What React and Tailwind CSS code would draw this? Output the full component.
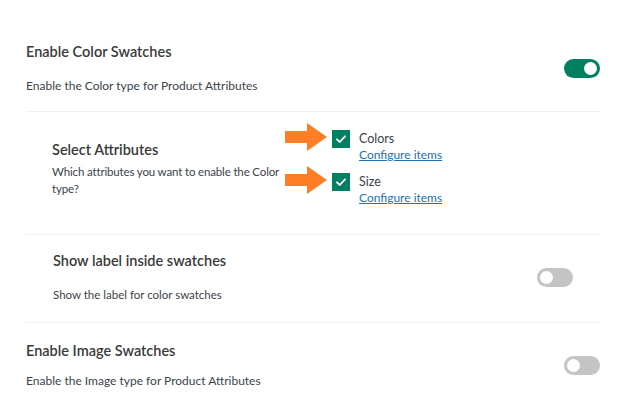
import React, { useState } from 'react';

// 토글 스위치
function Toggle({ on, onChange }) {
  return (
    <button
      onClick={() => onChange(!on)}
      className={`relative w-[36px] h-[19px] rounded-full shrink-0 ${on ? 'bg-[#008060]' : 'bg-[#c4c4c4]'}`}
    >
      <span
        className={`absolute top-[3px] w-[13px] h-[13px] rounded-full bg-white ${on ? 'left-[20px]' : 'left-[3px]'}`}
      />
    </button>
  );
}

// 주황 화살표 (주석용 오버레이)
function Arrow() {
  return (
    <svg width="42" height="28" viewBox="0 0 42 28" className="absolute left-[-47px] top-[-7px]">
      <polygon points="0,8 22,8 22,0 42,14 22,28 22,20 0,20" fill="#fd7e27" />
    </svg>
  );
}

function CheckItem({ label, checked, onToggle }) {
  return (
    <div className="relative flex gap-[9px]">
      <Arrow />
      <button
        onClick={onToggle}
        className={`w-[18px] h-[18px] flex items-center justify-center shrink-0 ${checked ? 'bg-[#008060]' : 'bg-white border border-gray-400'}`}
      >
        {checked && (
          <svg width="12" height="12" viewBox="0 0 12 12">
            <path d="M2 6.3 L4.8 9 L10 3.3" stroke="white" strokeWidth="1.8" fill="none" strokeLinecap="round" strokeLinejoin="round" />
          </svg>
        )}
      </button>
      <div className="flex flex-col">
        <span className="text-[12.5px] leading-[17px] text-[#3c434a]">{label}</span>
        <a href="#" className="text-[12px] leading-[16px] text-[#2271b1] underline">Configure items</a>
      </div>
    </div>
  );
}

export default function App() {
  const [colorOn, setColorOn] = useState(true);
  const [labelOn, setLabelOn] = useState(false);
  const [imageOn, setImageOn] = useState(false);
  const [attrs, setAttrs] = useState({ Colors: true, Size: true });

  return (
    <div className="min-h-screen bg-white px-[26px] text-[#3c434a]" style={{ fontFamily: 'Lato, "Noto Sans", sans-serif' }}>
      {/* 색상 스와치 */}
      <div className="flex items-center justify-between pt-[42px] pb-[16px] border-b border-[#f0f0f1]">
        <div className="flex flex-col gap-[15px]">
          <h2 className="text-[14.5px] leading-[20px] font-semibold text-[#3a3a3a]">Enable Color Swatches</h2>
          <p className="text-[12px] leading-[18px]">Enable the Color type for Product Attributes</p>
        </div>
        <Toggle on={colorOn} onChange={setColorOn} />
      </div>

      {/* 속성 선택 */}
      <div className="flex items-center px-[26px] pt-[18px] pb-[28px] border-b border-[#f0f0f1]">
        <div className="w-[280px] flex flex-col gap-[3px]">
          <h3 className="text-[14.5px] leading-[20px] font-semibold text-[#3a3a3a]">Select Attributes</h3>
          <p className="text-[11.5px] leading-[17px] tracking-[-0.15px] max-w-[232px]">Which attributes you want to enable the Color type?</p>
        </div>
        <div className="flex flex-col gap-[10px]">
          {Object.keys(attrs).map(k => (
            <CheckItem key={k} label={k} checked={attrs[k]} onToggle={() => setAttrs(p => ({ ...p, [k]: !p[k] }))} />
          ))}
        </div>
      </div>

      {/* 라벨 표시 */}
      <div className="flex items-center justify-between px-[27px] pt-[16px] pb-[18px] border-b border-[#f0f0f1]">
        <div className="flex flex-col gap-[15px]">
          <h3 className="text-[14.5px] leading-[20px] font-semibold text-[#3a3a3a]">Show label inside swatches</h3>
          <p className="text-[11.5px] leading-[18px]">Show the label for color swatches</p>
        </div>
        <Toggle on={labelOn} onChange={setLabelOn} />
      </div>

      {/* 이미지 스와치 */}
      <div className="flex items-center justify-between pt-[18px] pb-[16px]">
        <div className="flex flex-col gap-[11px]">
          <h2 className="text-[14.5px] leading-[20px] font-semibold text-[#3a3a3a]">Enable Image Swatches</h2>
          <p className="text-[12px] leading-[18px]">Enable the Image type for Product Attributes</p>
        </div>
        <Toggle on={imageOn} onChange={setImageOn} />
      </div>
    </div>
  );
}
